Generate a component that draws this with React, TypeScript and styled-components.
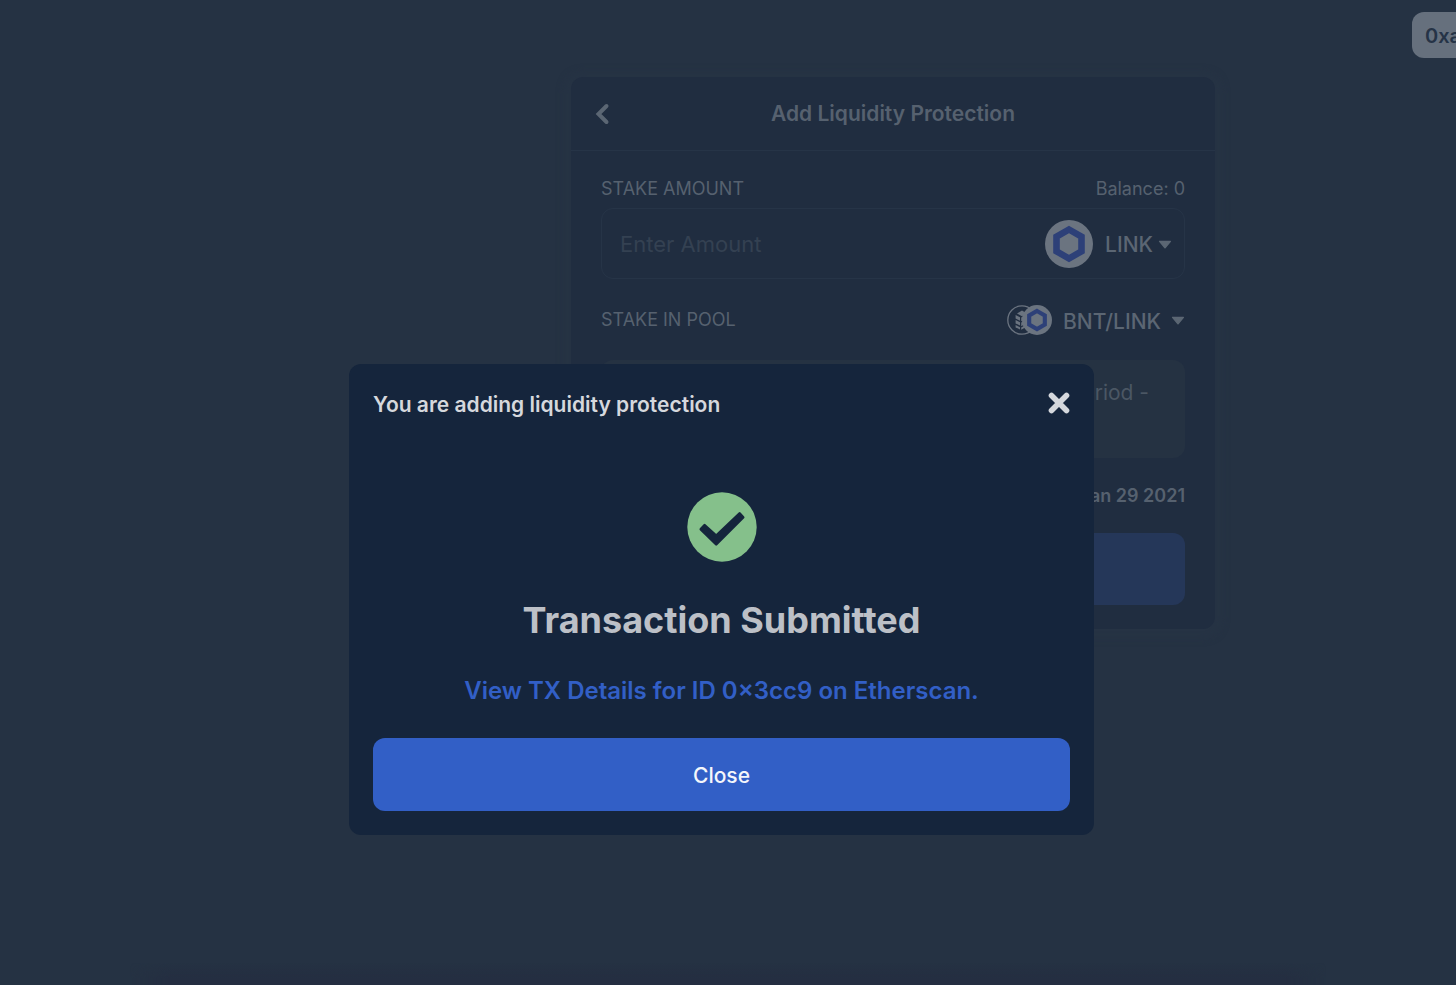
import React from 'react';
import styled, { createGlobalStyle } from 'styled-components';

const color = {
  page: '#253243',
  card: '#202d40',
  line: '#263447',
  dim: '#56616f',
  dimStrong: '#5b6673',
  faint: '#344152',
  token: '#6b7480',
  tokenBlue: '#2d4078',
  notice: '#253242',
  dimBlue: '#253759',
  modal: '#15253c',
  blue: '#325fc6',
  green: '#85c08b',
};

const GlobalStyle = createGlobalStyle`
  * { box-sizing: border-box; }
  body {
    margin: 0;
    background: ${color.page};
    font-family: Inter, "Liberation Sans", sans-serif;
  }
  button, input { font-family: inherit; }
  h1, h2, p { margin: 0; }
`;

const Page = styled.div`
  min-height: 100vh;
  display: flex;
  flex-direction: column;
  overflow: hidden;
`;

const TopBar = styled.header`
  display: flex;
  justify-content: flex-end;
  padding-top: 12px;
`;

const AccountButton = styled.button`
  flex: none;
  height: 46px;
  margin-right: -16px;
  padding: 2px 11px 0 13px;
  border: 0;
  border-radius: 12px;
  background: #66707d;
  color: #253346;
  font-size: 20px;
  font-weight: 600;
`;

const Main = styled.main`
  flex: 1;
  display: flex;
  justify-content: center;
  align-items: flex-start;
  padding: 19px 0 0 330px;
`;

const Card = styled.section`
  width: 644px;
  border-radius: 12px;
  background: ${color.card};
  box-shadow: 0 2px 6px 8px #263344;
`;

const CardHeader = styled.div`
  display: grid;
  grid-template-columns: 62px 1fr 62px;
  align-items: center;
  height: 74px;
  padding-top: 1px;
  border-bottom: 1px solid ${color.line};
`;

const IconButton = styled.button`
  display: flex;
  justify-content: center;
  align-items: center;
  height: 30px;
  padding: 0;
  border: 0;
  background: none;
`;

const CardTitle = styled.h1`
  color: ${color.dim};
  font-size: 21px;
  font-weight: 600;
  line-height: 28px;
  text-align: center;
`;

const CardBody = styled.div`
  padding: 28px 30px 24px;
`;

const Row = styled.div<{ $height: number }>`
  display: flex;
  justify-content: space-between;
  align-items: center;
  height: ${(p) => p.$height}px;
`;

const labelText = `
  color: ${color.dim};
  font-size: 18px;
  font-weight: 400;
  line-height: 20px;
`;

const FieldLabel = styled.label`${labelText}`;
const Caption = styled.span`${labelText}`;

const AmountField = styled.div`
  display: flex;
  align-items: center;
  height: 71px;
  margin: 9px 0 25px;
  padding: 0 12px 0 18px;
  border: 1px solid ${color.line};
  border-radius: 12px;
`;

const AmountInput = styled.input`
  flex: 1;
  min-width: 0;
  padding: 0;
  border: 0;
  outline: 0;
  background: none;
  color: ${color.dim};
  font-size: 22px;
  &::placeholder { color: ${color.faint}; opacity: 1; }
`;

const PickerButton = styled.button<{ $gap: number }>`
  display: flex;
  align-items: center;
  gap: ${(p) => p.$gap}px;
  padding: 0;
  border: 0;
  background: none;
  color: ${color.dimStrong};
  font-size: 21px;
  font-weight: 500;
`;

const PickerText = styled.span<{ $gap: number }>`
  display: flex;
  align-items: center;
  gap: ${(p) => p.$gap}px;
  padding-top: 2px;
`;

const PairIcons = styled.span`
  display: flex;
  align-items: center;
  svg + svg { margin-left: -15px; }
`;

const Notice = styled.p`
  height: 98px;
  margin: 24px 0;
  padding: 19px 36px;
  border-radius: 12px;
  background: ${color.notice};
  color: #4b5764;
  font-size: 21px;
  line-height: 28px;
  text-align: right;
`;

const DateText = styled.span`
  margin-left: auto;
  color: ${color.dim};
  font-size: 18px;
  font-weight: 600;
`;

const SubmitButton = styled.button`
  display: block;
  width: 100%;
  height: 72px;
  margin-top: 25px;
  border: 0;
  border-radius: 12px;
  background: ${color.dimBlue};
`;

const BottomShade = styled.footer`
  height: 22px;
  margin: 0 130px;
  background: linear-gradient(to bottom, transparent, #242e41 70%);
  mask-image: linear-gradient(to right, transparent, #000 40px, #000 calc(100% - 40px), transparent);
`;

const Overlay = styled.div`
  position: fixed;
  inset: 0;
  display: flex;
  justify-content: center;
  align-items: center;
  padding: 214px 13px 0 0;
`;

const Modal = styled.div`
  display: flex;
  flex-direction: column;
  align-items: center;
  width: 745px;
  padding: 24px;
  border-radius: 12px;
  background: ${color.modal};
`;

const ModalHeader = styled.div`
  display: flex;
  justify-content: space-between;
  align-items: flex-start;
  align-self: stretch;
  height: 34px;
  margin-bottom: 70px;
`;

const ModalTitle = styled.h2`
  color: #d5d8dd;
  font-size: 21px;
  font-weight: 600;
  line-height: 34px;
`;

const Status = styled.p`
  margin: 36px 0 33px;
  color: #bcc0c7;
  font-size: 36px;
  font-weight: 700;
  line-height: 44px;
`;

const TxLink = styled.a`
  color: ${color.blue};
  font-size: 24px;
  font-weight: 600;
  line-height: 32px;
  text-decoration: none;
`;

const CloseButton = styled.button`
  align-self: stretch;
  height: 73px;
  margin-top: 31px;
  padding: 2px 0 0;
  border: 0;
  border-radius: 12px;
  background: ${color.blue};
  color: #f4f6fb;
  font-size: 21px;
  font-weight: 500;
`;

const Caret = () => (
  <svg width="14" height="10" viewBox="0 0 14 10" aria-hidden="true">
    <path d="M1.6 1.4h10.8L7 7.8z" fill={color.dimStrong} stroke={color.dimStrong} strokeWidth="1.4" strokeLinejoin="round" />
  </svg>
);

const LinkToken = ({ size }: { size: number }) => (
  <svg width={size} height={size} viewBox="0 0 48 48" aria-hidden="true">
    <circle cx="24" cy="24" r="24" fill={color.token} />
    <path d="M24 9.5 36.5 16.7v14.6L24 38.5 11.5 31.3V16.7z" fill="none" stroke={color.tokenBlue} strokeWidth="6.6" />
  </svg>
);

const BntToken = () => (
  <svg width="30" height="30" viewBox="0 0 30 30" aria-hidden="true">
    <circle cx="15" cy="15" r="14.2" fill="none" stroke={color.token} strokeWidth="1.3" />
    <g fill={color.token}>
      <path d="M8.6 10l4.4 2.2v3.6l-4.4-2.2zM8.6 15l4.4 2.2v3.4l-4.4-2.2zM8.6 20l4.4 2.2V24.600l-4.4-2.200z" />
      <path d="M10 8.400 15 5.600l5 2.800-5 2.800z" />
      <path d="M14.200 12.400 20 9.200v3.900l-5.800 3.200zM14.200 17.500 20 14.300V18.100l-5.800 3.200zM14.200 22.500 20 19.300v2.300L14.200 24.800z" />
    </g>
  </svg>
);

export default function App() {
  return (
    <>
      <GlobalStyle />
      <Page>
        <TopBar>
          <AccountButton type="button">0xa</AccountButton>
        </TopBar>
        <Main>
          <Card>
            <CardHeader>
              <IconButton type="button" aria-label="Back">
                <svg width="16" height="22" viewBox="0 0 16 22" aria-hidden="true">
                  <path d="M12.5 3 4.5 11l8 8" fill="none" stroke={color.dimStrong} strokeWidth="4" strokeLinecap="round" />
                </svg>
              </IconButton>
              <CardTitle>Add Liquidity Protection</CardTitle>
            </CardHeader>
            <CardBody>
              <Row $height={20}>
                <FieldLabel htmlFor="amount">STAKE AMOUNT</FieldLabel>
                <Caption>Balance: 0</Caption>
              </Row>
              <AmountField>
                <AmountInput id="amount" type="text" placeholder="Enter Amount" />
                <PickerButton type="button" $gap={12}>
                  <LinkToken size={48} />
                  <PickerText $gap={5}>
                    LINK
                    <Caret />
                  </PickerText>
                </PickerButton>
              </AmountField>
              <Row $height={32}>
                <Caption>STAKE IN POOL</Caption>
                <PickerButton type="button" $gap={11}>
                  <PairIcons>
                    <BntToken />
                    <LinkToken size={30} />
                  </PairIcons>
                  <PickerText $gap={10}>
                    BNT/LINK
                    <Caret />
                  </PickerText>
                </PickerButton>
              </Row>
              <Notice>period -</Notice>
              <Row $height={26}>
                <DateText>Jan 29 2021</DateText>
              </Row>
              <SubmitButton type="button" aria-label="Stake and protect" />
            </CardBody>
          </Card>
        </Main>
        <BottomShade />
      </Page>
      <Overlay>
        <Modal role="dialog" aria-modal="true" aria-labelledby="modal-title">
          <ModalHeader>
            <ModalTitle id="modal-title">You are adding liquidity protection</ModalTitle>
            <IconButton type="button" aria-label="Dismiss">
              <svg width="22" height="22" viewBox="0 0 22 22" aria-hidden="true">
                <path d="M3.5 3.5l15 15M18.5 3.5l-15 15" stroke="#d5d8dd" strokeWidth="5.6" strokeLinecap="round" />
              </svg>
            </IconButton>
          </ModalHeader>
          <svg width="70" height="70" viewBox="0 0 70 70" aria-hidden="true">
            <circle cx="35" cy="35" r="34.7" fill={color.green} />
            <path
              d="M13.8 37.2 17.6 33.2 29.2 43.8 52.6 21.4 56.2 25.4 29.2 52.4z"
              fill={color.modal}
              stroke={color.modal}
              strokeWidth="2.6"
              strokeLinejoin="round"
            />
          </svg>
          <Status>Transaction Submitted</Status>
          <TxLink href="#transaction">View TX Details for ID 0×3cc9 on Etherscan.</TxLink>
          <CloseButton type="button">Close</CloseButton>
        </Modal>
      </Overlay>
    </>
  );
}
